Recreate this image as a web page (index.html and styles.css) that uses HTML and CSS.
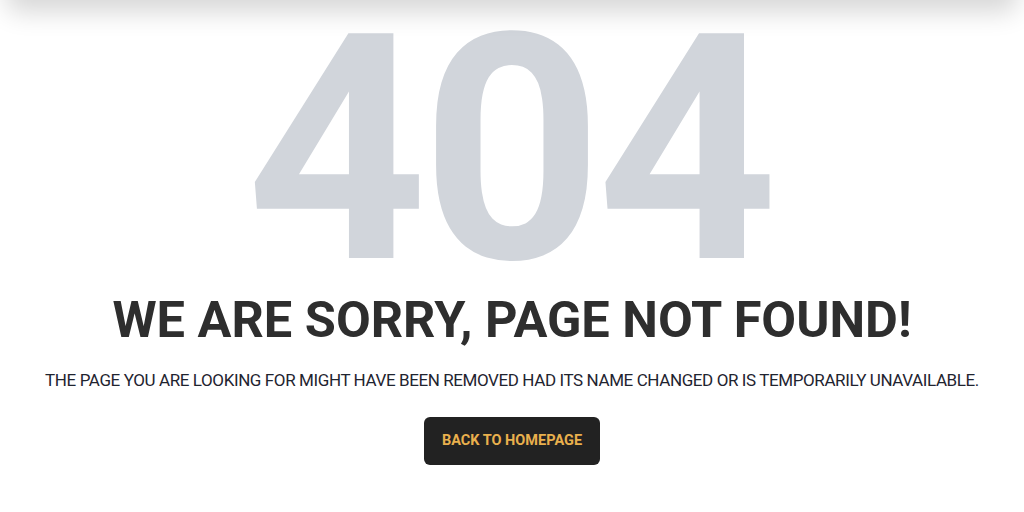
FILE: index.html
```html
<!DOCTYPE html>
<html lang="en">
<head>
<meta charset="utf-8">
<title>404 - Page not found</title>
<link rel="stylesheet" href="styles.css">
</head>
<body>
<header class="site-header"></header>
<main class="error-page">
  <div class="error-code">404</div>
  <h1 class="error-title">WE ARE SORRY, PAGE NOT FOUND!</h1>
  <p class="error-text">THE PAGE YOU ARE LOOKING FOR MIGHT HAVE BEEN REMOVED HAD ITS NAME CHANGED OR IS TEMPORARILY UNAVAILABLE.</p>
  <a class="home-btn" href="#">BACK TO HOMEPAGE</a>
</main>
</body>
</html>
```
FILE: styles.css
```css
html, body {
  margin: 0;
  padding: 0;
  background: #ffffff;
}
body {
  font-family: Roboto, "Liberation Sans", sans-serif;
  overflow: hidden;
}
.site-header {
  position: fixed;
  top: -70px;
  left: 6px;
  right: 6px;
  height: 70px;
  background: #ffffff;
  border-radius: 12px;
  box-shadow: 0 12px 26px rgba(0, 0, 0, 0.16);
}
.error-page {
  display: flex;
  flex-direction: column;
  align-items: center;
  text-align: center;
}
.error-code {
  padding-top: 7px;
  font-size: 316px;
  font-weight: 700;
  line-height: 0.911;
  color: #d1d5db;
  letter-spacing: -6px;
  text-indent: -6px;
}
.error-title {
  margin: 0;
  font-size: 50.5px;
  font-weight: 700;
  line-height: 1;
  color: #2e2e2e;
}
.error-text {
  margin: 25px 0 0;
  font-size: 17px;
  line-height: 1.2;
  font-weight: 400;
  letter-spacing: -0.4px;
  color: #1f2430;
}
.home-btn {
  margin-top: 26px;
  display: inline-flex;
  align-items: center;
  justify-content: center;
  width: 176px;
  height: 48px;
  box-sizing: border-box;
  background: #222222;
  border-radius: 6px;
  color: #e9b04d;
  font-size: 14.5px;
  font-weight: 700;
  text-decoration: none;
}
```
